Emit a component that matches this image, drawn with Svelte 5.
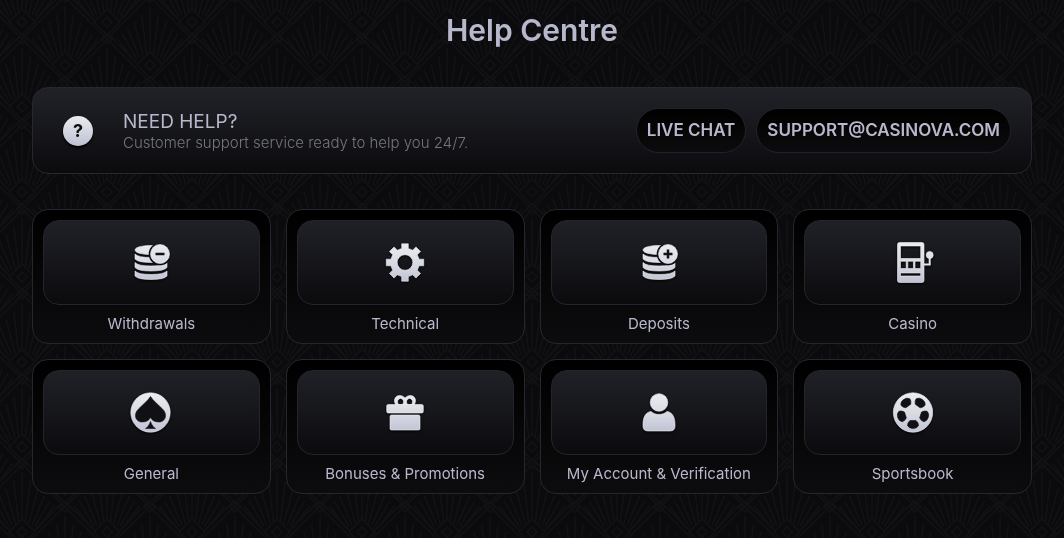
<script>
    const rays = [-37, -30, -23, -15, -7, 0, 7, 15, 23, 30, 37];
    const fans = [[65, 82], [22, 39], [107, 39], [22, 124], [107, 124], [65, -3], [65, 167], [-20, -3], [-20, 82]];

    const topics = [
        { title: "Withdrawals", icon: "minus" },
        { title: "Technical", icon: "gear" },
        { title: "Deposits", icon: "plus" },
        { title: "Casino", icon: "slot" },
        { title: "General", icon: "spade" },
        { title: "Bonuses & Promotions", icon: "gift" },
        { title: "My Account & Verification", icon: "person" },
        { title: "Sportsbook", icon: "ball" }
    ];

    const gear = getGear(22, 21.5, 8);

    function getGear(cx, cy, teeth) {
        const points = [];
        // angle offset and radius of the four corners of a tooth
        const corners = [[-13, 14.5], [-10, 19], [10, 19], [13, 14.5]];

        for (let k = 0; k < teeth; k++) {
            for (const [offset, r] of corners) {
                const a = ((k * 360) / teeth + offset) * Math.PI / 180;
                points.push(`${(cx + r * Math.cos(a)).toFixed(1)} ${(cy + r * Math.sin(a)).toFixed(1)}`);
            }
        }

        return `M${points.join("L")}Z`;
    }

    // a ray runs from the foot of the fan to the upper edge of its diamond
    function getRay(x, y, deg) {
        const a = deg * Math.PI / 180;
        const s = Math.abs(Math.sin(a));
        const c = Math.cos(a);
        const end = 76 / (s + c);
        return `M${x + 26 * Math.sin(a)} ${y - 26 * c}L${x + end * Math.sin(a)} ${y - end * c}`;
    }
</script>

<svg class="backdrop" aria-hidden="true">
    <defs>
        <pattern id="deco" width="85" height="85" patternUnits="userSpaceOnUse">
            {#each fans as [x, y]}
                <g class="deco-lines">
                    <path d={rays.map((deg) => getRay(x, y, deg)).join("")} />
                    <path d="M{x - 43} {y - 43}l43 43l43 -43M{x - 40} {y - 46}l40 40l40 -40" />
                    <path class="gem" d="M{x} {y - 30}l13 13l-13 13l-13 -13z" />
                    <path d="M{x} {y - 22}l5 5l-5 5l-5 -5zM{x} {y - 5}l5 5l-5 5l-5 -5z" />
                </g>
            {/each}
        </pattern>
        <linearGradient id="silver" x1="0" y1="2" x2="0" y2="42" gradientUnits="userSpaceOnUse">
            <stop offset="0" stop-color="#e9edf0" />
            <stop offset=".5" stop-color="#d9dbe4" />
            <stop offset="1" stop-color="#bfc1d3" />
        </linearGradient>
        <mask id="badge-cut">
            <rect width="44" height="44" fill="#fff" />
            <circle cx="31" cy="13" r="11.300" fill="#000" />
        </mask>
    </defs>
    <rect width="100%" height="100%" fill="url(#deco)" />
</svg>

<main>
    <h1>Help Centre</h1>

    <section class="support">
        <span class="question" aria-hidden="true">?</span>
        <div class="support-text">
            <h2>NEED HELP?</h2>
            <p>Customer support service ready to help you 24/7.</p>
        </div>
        <div class="actions">
            <button type="button" class="pill">LIVE CHAT</button>
            <a class="pill" href="mailto:support@casinova.com">SUPPORT@CASINOVA.COM</a>
        </div>
    </section>

    <nav class="topics" aria-label="Help topics">
        {#each topics as topic}
            <a class="topic" href="#{topic.icon}">
                <span class="tile">
                    <svg class="icon" viewBox="0 0 44 44" aria-hidden="true">
                        {#if topic.icon === "minus" || topic.icon === "plus"}
                            <g mask="url(#badge-cut)">
                                <path d="M6 9C6 6 14 4.500 22 4.500S38 6 38 9S30 13.500 22 13.500S6 12 6 9Z" />
                                {#each [13, 21.500, 30] as y}
                                    <path d="M6 {y}Q9 {y + 3.5} 22 {y + 3.5}T38 {y}V{y + 5}Q35 {y + 8.5} 22 {y + 8.5}T6 {y + 5}Z" />
                                {/each}
                            </g>
                            <circle cx="31" cy="13" r="9.500" />
                            <path class="cut" d={topic.icon === "plus" ? "M26.500 13h9M31 8.500v9" : "M26.500 13h9"} />
                        {:else if topic.icon === "gear"}
                            <path fill-rule="evenodd" d="{gear}M29.800 21.500a7.800 7.800 0 1 0 -15.600 0a7.800 7.800 0 1 0 15.600 0Z" />
                        {:else if topic.icon === "slot"}
                            <path fill-rule="evenodd" d="M8.500 1.500H31a2 2 0 0 1 2 2V39.500a2 2 0 0 1 -2 2H8.500a2 2 0 0 1 -2 -2V3.500a2 2 0 0 1 2 -2ZM9.500 5V17.500H29.700V5ZM9.500 20.300V27.500H15.200V20.300ZM16.800 20.300V27.500H22.400V20.300ZM24 20.300V27.500H29.700V20.300ZM9.500 32V35H29.700V32Z" />
                            <path class="lever" d="M33 23.500h5.700V14" />
                            <circle cx="38.700" cy="14" r="3.500" />
                        {:else if topic.icon === "spade"}
                            <circle cx="21.500" cy="21.500" r="19.700" />
                            <path class="patch" d="M21.500 5.500C19 9.500 14 13.500 10 17.500C7.500 20 6.500 22 6.500 24.500C6.500 28.500 9.500 31 13 31C17 31 20 29.500 21.500 26.500C23 29.500 26 31 30 31C33.500 31 36.500 28.500 36.500 24.500C36.500 22 35.500 20 33 17.500C29 13.500 24 9.500 21.500 5.500ZM21.500 30.500C20.500 33.500 18.500 36.500 16.500 37.500H26.500C24.500 36.500 22.500 33.500 21.500 30.500Z" />
                        {:else if topic.icon === "gift"}
                            <path fill-rule="evenodd" d="M13 14C9.500 9 12.500 4.500 16.500 4.500C19 4.500 20.500 5.500 22 7C23.500 5.500 25 4.500 27.500 4.500C31.500 4.500 34.500 9 31 14ZM17.500 7.500a3 3.300 0 1 0 .1 0ZM26.500 7.500a3 3.300 0 1 0 .1 0Z" />
                            <rect x="3.700" y="13.500" width="36.600" height="8.500" rx="1.500" />
                            <rect x="7" y="24" width="30" height="15" rx="1.500" />
                        {:else if topic.icon === "person"}
                            <circle cx="22" cy="11.500" r="8.800" />
                            <path d="M14 20.500C18 24.500 26 24.500 30 20.500C35 21 38 26 38 33V35.500C38 38.500 36 40 33 40H11C8 40 6 38.500 6 35.500V33C6 26 9 21 14 20.500Z" />
                        {:else}
                            <circle cx="22" cy="21.500" r="19.700" />
                            {#each [0, 72, 144, 216, 288] as turn}
                                <path class="patch" transform="rotate({turn} 22 21.500)" d="M19 29.500H25Q27.500 31.500 27.500 34.500Q26 37.500 22 37.500T16.500 34.500Q16.500 31.500 19 29.500Z" />
                            {/each}
                        {/if}
                    </svg>
                </span>
                <span class="label">{topic.title}</span>
            </a>
        {/each}
    </nav>
</main>

<style>
    :global(body) {
        margin: 0;
        background: #0b0b0d;
        color: #b8b8cc;
        font-family: Inter, "Open Sans", sans-serif;
    }

    .backdrop {
        position: fixed;
        inset: 0;
        width: 100%;
        height: 100%;
        z-index: -1;
    }

    .deco-lines path {
        fill: none;
        stroke: #121214;
        stroke-width: 1.5;
    }

    .deco-lines .gem {
        fill: #0b0b0d;
    }

    main {
        padding: 10px 32px 44px;
    }

    h1 {
        margin: 0 0 37px;
        font-size: 30px;
        line-height: 40px;
        font-weight: 600;
        text-align: center;
    }

    .support {
        display: flex;
        align-items: center;
        box-sizing: border-box;
        min-height: 87px;
        padding: 20px 20px 20px 30px;
        margin-bottom: 35px;
        border: 1px solid #27272f;
        border-radius: 16px;
        background: linear-gradient(#212228, #0b0b0e);
    }

    .question {
        flex: none;
        width: 30px;
        height: 30px;
        margin-right: 30px;
        border-radius: 50%;
        background: linear-gradient(#e9edf0, #bfc1d3);
        box-shadow: 0 2px 2px #000;
        color: #0e0e12;
        font-size: 18px;
        line-height: 30px;
        font-weight: 700;
        text-align: center;
    }

    .support-text {
        flex: 1;
        padding-top: 2px;
    }

    h2 {
        margin: 0;
        font-size: 19px;
        line-height: 22px;
        font-weight: 400;
    }

    p {
        margin: 0;
        color: #74747f;
        font-size: 15px;
        line-height: 20px;
        font-weight: 300;
    }

    .actions {
        display: flex;
        gap: 10px;
    }

    .pill {
        box-sizing: border-box;
        height: 45px;
        padding: 0 10px;
        border: 1px solid #222228;
        border-radius: 23px;
        background: linear-gradient(#000, #0c0c0e);
        color: inherit;
        font-family: inherit;
        font-size: 17px;
        line-height: 43px;
        font-weight: 600;
        text-decoration: none;
        white-space: nowrap;
    }

    .topics {
        display: grid;
        grid-template-columns: repeat(4, 1fr);
        gap: 15px;
    }

    .topic {
        padding: 10px;
        border: 1px solid #26262e;
        border-radius: 16px;
        background: linear-gradient(#000, #0c0c0e);
        color: inherit;
        text-align: center;
        text-decoration: none;
    }

    .tile {
        display: flex;
        align-items: center;
        justify-content: center;
        box-sizing: border-box;
        height: 85px;
        border: 1px solid #24242b;
        border-radius: 16px;
        background: linear-gradient(#202127, #0b0b0e);
    }

    .icon {
        width: 44px;
        height: 44px;
        fill: url(#silver);
        stroke: #eef0f5;
        stroke-width: .6;
        filter: drop-shadow(0 1px 1px #000);
    }

    .icon .cut {
        stroke: #111115;
        stroke-width: 2.5;
    }

    .icon .lever {
        fill: none;
        stroke: #e3e5ec;
        stroke-width: 2;
    }

    .icon .patch {
        fill: #111115;
        stroke: #111115;
    }

    .label {
        display: block;
        margin-top: 10px;
        font-size: 15px;
        line-height: 18px;
    }
</style>
